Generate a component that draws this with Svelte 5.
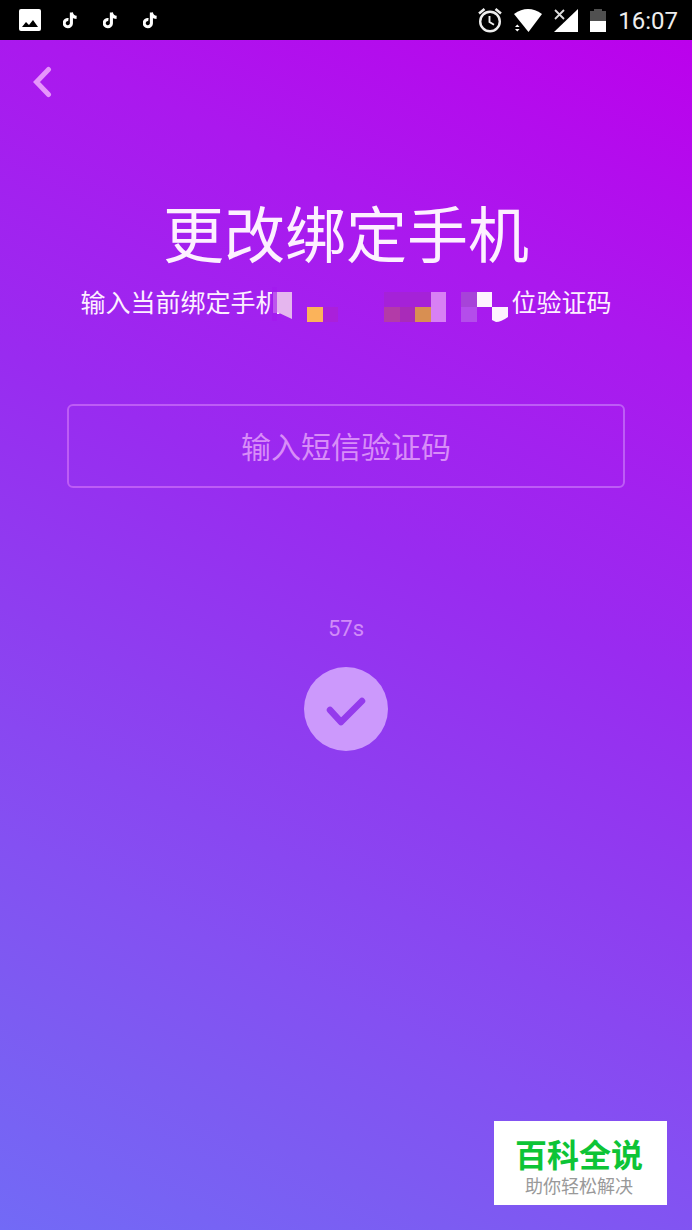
<script>
  let code = $state('');
  const seconds = 57;
  const notes = [1, 2, 3];
</script>

<div class="screen">
  <header class="status">
    <div class="group left">
      <svg width="22" height="22" viewBox="0 0 22 22" aria-hidden="true">
        <rect width="22" height="22" rx="2" fill="#fff" />
        <path d="M3 18 L7 13 L10 16 L14 11 L19 18Z" fill="#000" />
      </svg>
      {#each notes as n (n)}
        <svg width="14" height="17" viewBox="0 0 14 17" aria-hidden="true">
          <path d="M8.400 0.500 V11 A3.600 3.600 0 1 1 5.400 7.600 M8.400 0.500 C8.700 3.700 10.500 5.200 13.600 5.400" fill="none" stroke="#fff" stroke-width="3.100" />
        </svg>
      {/each}
    </div>
    <div class="group right">
      <svg width="24" height="26" viewBox="0 0 24 26" fill="none" stroke="#eee" aria-hidden="true">
        <circle cx="12" cy="14.500" r="9.800" stroke-width="2.400" />
        <path d="M1 6.500 L6.500 2 M23 6.500 L17.500 2" stroke-width="2.500" />
        <path d="M11.500 9 V15 L16 17.700" stroke-width="1.900" />
      </svg>
      <svg width="28" height="25" viewBox="0 0 28 25" fill="#fff" aria-hidden="true">
        <path d="M0 6 Q14 -4 28 6 L14.500 24Z" />
        <path d="M1 19 L3.300 16.500 L5.600 19Z M1 21 L3.300 23.500 L5.600 21Z" />
      </svg>
      <svg width="24" height="25" viewBox="0 0 24 25" aria-hidden="true">
        <path d="M24 1 V24 H0Z" fill="#fff" />
        <path d="M1 2 L10 11 M10 2 L1 11" stroke="#ddd" stroke-width="1.800" />
      </svg>
      <svg width="16" height="25" viewBox="0 0 16 25" aria-hidden="true">
        <path d="M0 13 V3 H4 V1 H12 V3 H16 V13Z" fill="#505050" />
        <path d="M0 13 H16 V24 H0Z" fill="#fff" />
      </svg>
      <time>16:07</time>
    </div>
  </header>

  <main>
    <button class="back" type="button" aria-label="返回">
      <svg width="20" height="32" viewBox="0 0 20 32" aria-hidden="true">
        <path d="M16.500 3.500 L4.500 16 L16.500 28.500" fill="none" stroke="#e695fb" stroke-width="5" stroke-linecap="round" />
      </svg>
    </button>

    <h1>更改绑定手机</h1>
    <p class="hint">
      <span>输入当前绑定手机</span>
      <svg class="mosaic" width="236" height="34" viewBox="0 0 236 34" aria-hidden="true">
        <path d="M0 0 H5 V34 H0Z" fill="#a31bef" />
        <path d="M1 5 H5 V26 H1Z" fill="#bd55ed" />
        <path d="M5 5 H20 V32 L5 25Z" fill="#e5b6ee" />
        <path d="M35 20 H51 V35 H35Z" fill="#fbb35a" />
        <path d="M51 20 H66 V35 H51Z" fill="#aa20da" />
        <path d="M112 5 H159 V20 H112Z" fill="#a522d8" />
        <path d="M112 20 H128 V35 H112Z" fill="#b33ba8" />
        <path d="M128 20 H143 V35 H128Z" fill="#a92bb9" />
        <path d="M143 20 H159 V35 H143Z" fill="#d88f52" />
        <path d="M159 5 H174 V35 H159Z" fill="#d880f4" />
        <path d="M189 5 H205 V20 H189Z" fill="#a743d9" />
        <path d="M189 20 H205 V35 H189Z" fill="#b44deb" />
        <path d="M205 5 H220 V20 H205Z" fill="#fdf3fe" />
        <path d="M220 20 H236 V30 Q229 35 224 35 L220 33Z" fill="#fdf3fe" />
      </svg>
      <span>位验证码</span>
    </p>

    <form onsubmit={(e) => e.preventDefault()}>
      <input bind:value={code} type="text" inputmode="numeric" aria-label="短信验证码" placeholder="输入短信验证码" />
      <span class="count">{seconds}s</span>
      <button class="confirm" type="submit" aria-label="确认">
        <svg width="40" height="32" viewBox="0 0 40 32" aria-hidden="true">
          <path d="M4 14 L15 26 L36 5" fill="none" stroke="#943bec" stroke-width="6.500" stroke-linecap="round" stroke-linejoin="round" />
        </svg>
      </button>
    </form>
  </main>

  <aside class="brand">
    <strong>百科全说</strong>
    <span>助你轻松解决</span>
  </aside>
</div>

<style>
  :global(body) { margin: 0; }
  .screen {
    min-height: 100vh;
    box-sizing: border-box;
    position: relative;
    display: flex;
    flex-direction: column;
    color: #fdf0ff;
    font-family: Roboto, "Noto Sans CJK SC", sans-serif;
    background: linear-gradient(26deg, #726af6 0%, #7c5cf2 14%, #8450f2 25%, #8e3ef0 40%, #992bf0 56%, #ab18ee 77%, #bc00ec 98%);
  }
  .status {
    height: 40px;
    padding: 0 14px 0 19px;
    background: #000;
    display: flex;
    justify-content: space-between;
    align-items: center;
  }
  .group { display: flex; align-items: center; }
  .left { gap: 26px; }
  .left svg:first-child { margin-right: -4px; }
  .right { gap: 12px; }
  time { font-size: 24px; line-height: 32px; color: #eee; padding-top: 2px; }
  main {
    padding: 0 67px;
    display: flex;
    flex-direction: column;
  }
  button { border: 0; padding: 0; cursor: pointer; }
  .back {
    align-self: flex-start;
    display: flex;
    margin: 26px 0 0 -35px;
    background: none;
  }
  h1 {
    margin: 95px 0 0;
    font-size: 61px;
    line-height: 88px;
    font-weight: 400;
    text-align: center;
    white-space: nowrap;
  }
  .hint {
    margin: 5px 0 0;
    display: flex;
    justify-content: center;
    font-size: 25px;
    line-height: 36px;
    white-space: nowrap;
  }
  .mosaic { margin: 1px 4px 0 -9px; position: relative; flex: none; overflow: visible; }
  form { display: flex; flex-direction: column; align-items: center; }
  input {
    width: 100%;
    height: 84px;
    box-sizing: border-box;
    margin-top: 82px;
    padding: 3px 0 0;
    border: 2px solid #bd5cf5;
    border-radius: 6px;
    background: none;
    color: #fff;
    font: inherit;
    font-size: 30px;
    text-align: center;
    outline: none;
  }
  input::placeholder { color: #d88df8; opacity: 1; }
  .count { margin-top: 125px; font-size: 22px; line-height: 32px; color: #d18bf8; }
  .confirm {
    width: 84px;
    height: 84px;
    margin-top: 22px;
    border-radius: 50%;
    background: #cc99fc;
    display: flex;
    align-items: center;
    justify-content: center;
  }
  .confirm svg { margin-top: 6px; }
  .brand {
    position: absolute;
    right: 25px;
    bottom: 25px;
    box-sizing: border-box;
    padding: 14px 24px 8px 21px;
    background: #fff;
    display: flex;
    flex-direction: column;
    align-items: center;
    white-space: nowrap;
  }
  .brand strong { font-size: 32px; line-height: 42px; font-weight: 700; color: #0dc436; }
  .brand span { font-size: 18px; line-height: 20px; color: #999; }
</style>
